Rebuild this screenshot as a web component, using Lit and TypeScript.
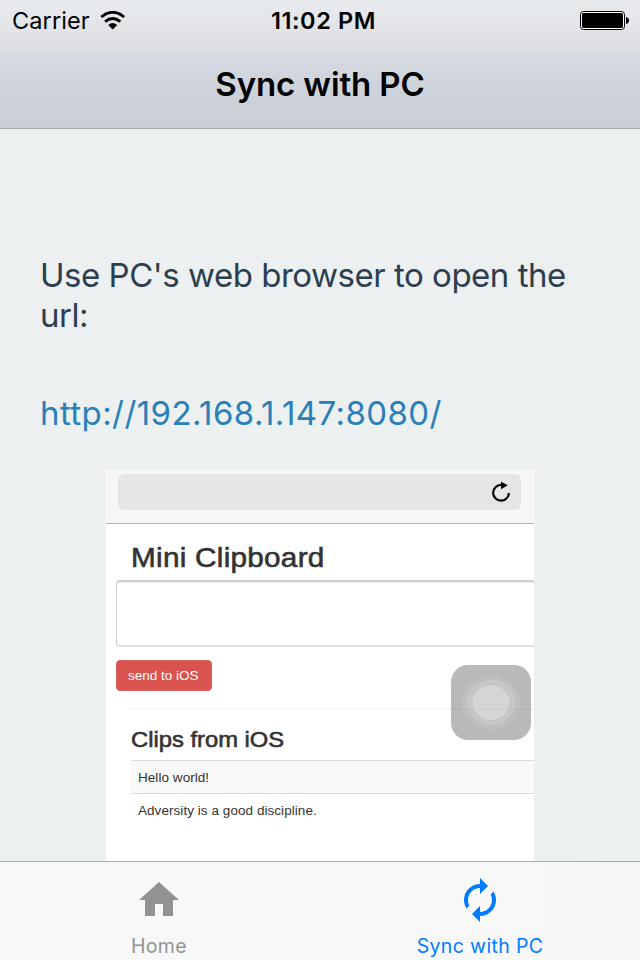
import { LitElement, html, css, svg } from "lit";
import { customElement, property } from "lit/decorators.js";

@customElement("status-bar")
class StatusBar extends LitElement {
  static styles = css`
    :host { display: grid; grid-template-columns: 1fr auto 1fr; align-items: center; height: 40px; padding: 0 11px 0 12px; }
    .left { display: flex; align-items: center; gap: 10px; font-size: 23.5px; letter-spacing: 0.1px; }
    .time { font-size: 23.5px; font-weight: 600; letter-spacing: 0.6px; padding-left: 6px; white-space: nowrap; }
    .battery { justify-self: end; }
    svg { display: block; margin-top: 2px; }
  `;
  render() {
    return html`
      <div class="left">
        <span>Carrier</span>
        <svg width="26" height="20" viewBox="0 0 26 20">
          <path d="M1.3 6Q12.7-3.4 24.1 6" fill="none" stroke="#000" stroke-width="2.9" />
          <path d="M5.1 10.6Q12.7 4.4 20.3 10.6" fill="none" stroke="#000" stroke-width="2.9" />
          <path d="M8.2 14Q12.7 10.2 17.2 14L12.7 18.4Z" />
        </svg>
      </div>
      <div class="time">11:02 PM</div>
      <svg class="battery" width="49" height="20" viewBox="0 0 49 20">
        <rect x=".5" y=".5" width="44" height="18" rx="3" fill="#fff" stroke="#000" />
        <rect x="2" y="2" width="41" height="15" rx="1.5" />
        <path d="M46 6q3 .8 3 3.5T46 13Z" />
      </svg>
    `;
  }
}

@customElement("clipboard-preview")
class ClipboardPreview extends LitElement {
  @property({ attribute: false }) clips = ["Hello world!", "Adversity is a good discipline."];
  static styles = css`
    :host {
      display: block; position: relative; width: 428px; height: 391px; overflow: hidden;
      background: #fff; color: #333; font-family: "Liberation Sans", Arial, sans-serif;
    }
    .bar { box-sizing: border-box; height: 54px; padding: 4px 13px 0 12px; background: #f7f7f7; border-bottom: 1px solid #b2b2b2; }
    .address { box-sizing: border-box; height: 36px; border-radius: 6px; background: #e5e5e7; display: flex; justify-content: flex-end; padding: 7px 10px; }
    .wide { display: block; transform: scaleX(1.08); transform-origin: 0 50%; white-space: nowrap; }
    h1, h2 { margin: 0 0 0 25px; font-weight: 400; -webkit-text-stroke: 0.6px #333; }
    h1 { font-size: 27.5px; line-height: 32px; padding-top: 18px; height: 38px; letter-spacing: 0.25px; }
    h2 { font-size: 22px; line-height: 28px; padding-top: 16px; height: 34px; }
    .field { box-sizing: border-box; height: 67px; margin-left: 10px; border: 1px solid #ccc; border-top: 2px solid #cfcfcf; border-right: 0; border-bottom: 2px solid #e0e0e0; border-radius: 4px 0 0 4px; box-shadow: inset 0 1px 1px #eee; }
    .send { box-sizing: border-box; width: 96px; height: 31px; margin: 13px 0 0 10px; padding-left: 11px; border: 1px solid #dd625e; border-radius: 4px; background: #d9534f; color: #fff; font-size: 12.5px; line-height: 31px; }
    .rule { height: 2px; margin: 17px 0 0 25px; background: #f7f7f7; }
    .clip { box-sizing: border-box; height: 33px; margin: 0 0 0 25px; padding-left: 7px; border-top: 1px solid #dcdcdc; font-size: 12.5px; line-height: 35px; letter-spacing: 0.05px; }
    .striped { background: #f9f9f9; }
    .touch { position: absolute; left: 345px; top: 195px; }
    svg { display: block; }
  `;
  render() {
    return html`
      <div class="bar"><div class="address">
        <svg width="20" height="22" viewBox="0 0 20 22">
          <path d="M10 3.9A7.9 7.9 0 1 0 17.9 12" fill="none" stroke="#000" stroke-width="2.2" />
          <path d="M10 .7L16.8 4.3L10 8.2Z" />
        </svg>
      </div></div>
      <h1><span class="wide">Mini Clipboard</span></h1>
      <div class="field"></div>
      <div class="send"><span class="wide">send to iOS</span></div>
      <div class="rule"></div>
      <h2><span class="wide">Clips from iOS</span></h2>
      <section>
        ${this.clips.map((c, i) => html`<p class="clip ${i % 2 ? "" : "striped"}"><span class="wide">${c}</span></p>`)}
      </section>
      <svg class="touch" width="80" height="75" viewBox="0 0 80 75">
        <rect width="80" height="75" rx="17" fill="#b9b9b9" />
        <ellipse cx="40" cy="37.5" rx="29.5" ry="27.5" fill="#bebebe" />
        <ellipse cx="40" cy="37.5" rx="24.5" ry="22.8" fill="#c7c7c7" />
        <ellipse cx="40" cy="37.5" rx="19.5" ry="18.2" fill="#bfbfbf" />
        <ellipse cx="40" cy="37.5" rx="18.8" ry="17.5" fill="#d5d5d5" />
        <path d="M0 44H80" stroke="#000" stroke-opacity=".025" stroke-width="2" />
      </svg>
    `;
  }
}

const HOME = "M10 20v-6h4v6h5v-8h3L12 3 2 12h3v8z";
const SYNC = "M12 6v3l4-4-4-4v3c-4.42 0-8 3.58-8 8 0 1.57.46 3.03 1.24 4.26L6.7 14.8c-.45-.83-.7-1.79-.7-2.8 0-3.31 2.69-6 6-6zm6.76 1.74L17.3 9.2c.44.84.7 1.79.7 2.8 0 3.31-2.69 6-6 6v-3l-4 4 4 4v-3c4.42 0 8-3.58 8-8 0-1.57-.46-3.03-1.24-4.26z";

@customElement("app-root")
class AppRoot extends LitElement {
  static styles = css`
    :host { display: flex; flex-direction: column; width: 640px; height: 960px; overflow: hidden; background: #ecf0f1; color: #000; font-family: Inter, sans-serif; }
    header { box-sizing: border-box; flex: none; height: 129px; border-bottom: 1px solid #a5a8ac; background: linear-gradient(#e8ebed 0, #e3e5e9 25px, #dadde1 50px, #d4d8e0 62px, #cdd2da 95px, #cacfd8 128px); }
    .title { margin: 0; text-align: center; font-size: 33px; font-weight: 600; line-height: 40px; padding-top: 24px; letter-spacing: -0.12px; }
    main { flex: 1; min-height: 0; display: flex; flex-direction: column; }
    .lead { margin: 0; padding: 126px 40px 0; font-size: 33px; line-height: 40px; color: #2c3e50; letter-spacing: -0.48px; }
    .url { padding: 58px 40px 0; font-size: 33px; line-height: 40px; color: #2980b9; letter-spacing: 0.42px; }
    clipboard-preview { margin: 37px auto 0; }
    nav { box-sizing: border-box; flex: none; height: 99px; border-top: 1px solid #aaacac; background: linear-gradient(90deg, #f6f8f9, #f8f8f8 20%, #f8f8f8 80%, #f4f6f8); display: grid; grid-template-columns: 318px 322px; }
    .tab { display: flex; flex-direction: column; align-items: center; padding-top: 14px; color: #929292; font-size: 19.5px; line-height: 24px; letter-spacing: 0.35px; gap: 10px; }
    .active { color: #007aff; padding-left: 2px; }
    svg { display: block; fill: currentColor; }
  `;
  private tab(label: string, icon: string, active: boolean) {
    return html`<div class="tab ${active ? "active" : ""}">
      <svg width="48" height="48" viewBox="0 0 24 24">${svg`<path d=${icon} />`}</svg>
      <span>${label}</span>
    </div>`;
  }
  render() {
    return html`
      <header><status-bar></status-bar><h1 class="title">Sync with PC</h1></header>
      <main>
        <p class="lead">Use PC's web browser to open the url:</p>
        <div class="url">http://192.168.1.147:8080/</div>
        <clipboard-preview></clipboard-preview>
      </main>
      <nav>${this.tab("Home", HOME, false)}${this.tab("Sync with PC", SYNC, true)}</nav>
    `;
  }
}
